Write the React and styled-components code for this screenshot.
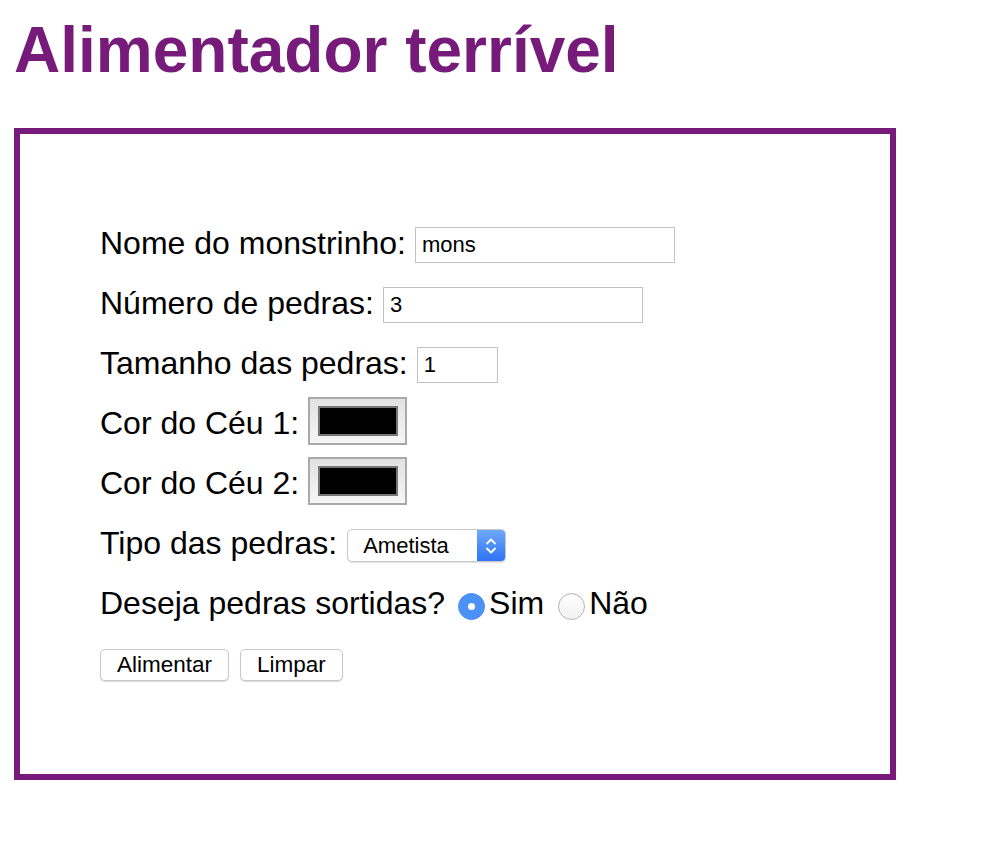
import React, { useState } from 'react';
import styled, { createGlobalStyle } from 'styled-components';

const GlobalStyle = createGlobalStyle`
  body {
    margin: 0;
    background: #fff;
    font-family: "Liberation Sans", Arial, Helvetica, sans-serif;
    color: #000;
  }
`;

const Page = styled.div`
  padding: 0 14px;
`;

const Title = styled.h1`
  margin: 13px 0 41px;
  font-size: 64px;
  line-height: 74px;
  font-weight: bold;
  color: #761b7a;
`;

const Panel = styled.form`
  box-sizing: border-box;
  width: 882px;
  height: 652px;
  border: 6px solid #761b7a;
  padding: 77px 0 0 80px;
  display: flex;
  flex-direction: column;
`;

const Row = styled.div`
  display: flex;
  align-items: flex-start;
  height: 60px;
`;

const Label = styled.span`
  padding-top: 2px;
  font-size: 32px;
  line-height: 60px;
  white-space: pre;
`;

const TextInput = styled.input`
  box-sizing: border-box;
  width: ${(p) => p.$width}px;
  height: 36px;
  margin: 16px 0 0 9px;
  padding: 0 6px;
  border: 1px solid #c2c2c2;
  font-family: "Liberation Sans", Arial, sans-serif;
  font-size: 22px;
  color: #000;
  outline: none;
`;

const ColorWell = styled.div`
  box-sizing: border-box;
  width: 99px;
  height: 48px;
  margin: 6px 0 0 9px;
  border: 2px solid #a9a9a9;
  background: linear-gradient(#e2e2e2, #f6f6f6);
  display: flex;
  align-items: center;
  justify-content: center;
`;

const Swatch = styled.div`
  box-sizing: border-box;
  width: 80px;
  height: 30px;
  border: 2px solid #767676;
  background: ${(p) => p.$color};
`;

const Select = styled.div`
  box-sizing: border-box;
  width: 159px;
  height: 33px;
  margin: 18px 0 0 10px;
  border: 1px solid #c8c8c8;
  border-radius: 5px;
  box-shadow: 0 1px 1px rgba(0, 0, 0, 0.12);
  background: #fff;
  display: flex;
  overflow: hidden;
`;

const SelectText = styled.span`
  flex: 1;
  padding-left: 15px;
  font-size: 22px;
  line-height: 31px;
`;

const SelectArrows = styled.span`
  width: 28px;
  background: linear-gradient(#6ea9f8, #2f72f5);
  display: flex;
  align-items: center;
  justify-content: center;
`;

const Radio = styled.span`
  box-sizing: border-box;
  width: 27px;
  height: 27px;
  margin: 22px 4px 0 ${(p) => p.$gap}px;
  border-radius: 50%;
  display: flex;
  align-items: center;
  justify-content: center;
  border: 1px solid ${(p) => (p.$checked ? '#4a8ff4' : '#b5b5b5')};
  background: ${(p) =>
    p.$checked ? '#4c91f5' : 'linear-gradient(#ffffff, #f1f1f1)'};
  box-shadow: ${(p) => (p.$checked ? 'none' : 'inset 0 1px 1px rgba(0,0,0,0.06)')};
  &::after {
    content: '';
    display: ${(p) => (p.$checked ? 'block' : 'none')};
    width: 7px;
    height: 7px;
    border-radius: 50%;
    background: #fff;
  }
`;

const Buttons = styled.div`
  display: flex;
  gap: 11px;
  margin-top: 18px;
`;

const Button = styled.button`
  box-sizing: border-box;
  height: 32px;
  padding: 0 16px;
  border: 1px solid #c8c8c8;
  border-radius: 5px;
  background: #fff;
  box-shadow: 0 1px 1px rgba(0, 0, 0, 0.15);
  font-family: "Liberation Sans", Arial, sans-serif;
  font-size: 22.5px;
  color: #000;
`;

function Chevrons() {
  return (
    <svg width="12" height="20" viewBox="0 0 12 20" fill="none">
      <path d="M2 7.5 L6 3.5 L10 7.5" stroke="#fff" strokeWidth="1.8" strokeLinecap="round" strokeLinejoin="round" />
      <path d="M2 12.5 L6 16.5 L10 12.5" stroke="#fff" strokeWidth="1.8" strokeLinecap="round" strokeLinejoin="round" />
    </svg>
  );
}

export default function App() {
  const [sortidas, setSortidas] = useState(true);

  return (
    <Page>
      <GlobalStyle />
      <Title>Alimentador terrível</Title>
      <Panel onSubmit={(e) => e.preventDefault()}>
        <Row>
          <Label>Nome do monstrinho:</Label>
          <TextInput $width={260} defaultValue="mons" />
        </Row>
        <Row>
          <Label>Número de pedras:</Label>
          <TextInput $width={260} defaultValue="3" />
        </Row>
        <Row>
          <Label>Tamanho das pedras:</Label>
          <TextInput $width={81} defaultValue="1" />
        </Row>
        <Row>
          <Label>Cor do Céu 1:</Label>
          <ColorWell>
            <Swatch $color="#000" />
          </ColorWell>
        </Row>
        <Row>
          <Label>Cor do Céu 2:</Label>
          <ColorWell>
            <Swatch $color="#000" />
          </ColorWell>
        </Row>
        <Row>
          <Label>Tipo das pedras:</Label>
          <Select>
            <SelectText>Ametista</SelectText>
            <SelectArrows>
              <Chevrons />
            </SelectArrows>
          </Select>
        </Row>
        <Row>
          <Label>Deseja pedras sortidas?</Label>
          <Radio $gap={13} $checked={sortidas} onClick={() => setSortidas(true)} />
          <Label>Sim</Label>
          <Radio $gap={14} $checked={!sortidas} onClick={() => setSortidas(false)} />
          <Label>Não</Label>
        </Row>
        <Buttons>
          <Button type="submit">Alimentar</Button>
          <Button type="reset">Limpar</Button>
        </Buttons>
      </Panel>
    </Page>
  );
}
